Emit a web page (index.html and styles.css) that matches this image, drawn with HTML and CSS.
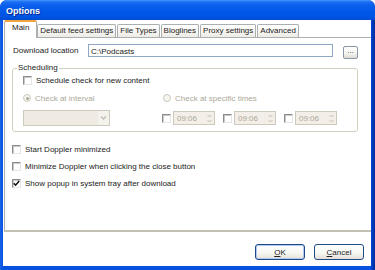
FILE: index.html
```html
<!DOCTYPE html>
<html lang="en">
<head>
  <meta charset="UTF-8">
  <title>Options</title>
  <link rel="stylesheet" href="styles.css">
</head>
<body>
  <div class="window">
    <div class="titlebar">
      <span class="title">Options</span>
    </div>
    <div class="client">
      <div class="tabs">
        <div class="tab active">Main</div>
        <div class="tab">Default feed settings</div>
        <div class="tab">File Types</div>
        <div class="tab">Bloglines</div>
        <div class="tab">Proxy settings</div>
        <div class="tab">Advanced</div>
      </div>

      <div class="panel">
        <div class="location-row">
          <span class="location-label">Download location</span>
          <div class="textbox">C:\Podcasts</div>
          <button class="browse">...</button>
        </div>

        <fieldset class="group">
          <legend>Scheduling</legend>
          <div class="group-body">
            <div class="check-row"><span class="check"></span>Schedule check for new content</div>
            <div class="sched-grid">
              <div class="radio-row"><span class="radio checked"></span>Check at interval</div>
              <div class="radio-row"><span class="radio"></span>Check at specific times</div>
              <div class="combo">
                <span class="combo-btn">
                  <svg width="9" height="8" viewBox="0 0 9 8"><path d="M2 2.5 L4.5 5 L7 2.5" fill="none" stroke="#c2bdb0" stroke-width="1.3"/></svg>
                </span>
              </div>
              <div class="times">
                <div class="time">
                  <span class="check"></span>
                  <span class="timebox"><span class="time-text">09:06</span><span class="spin"><svg width="7" height="11" viewBox="0 0 7 11"><path d="M1.5 4 L3.5 2 L5.5 4 M1.5 7 L3.5 9 L5.5 7" fill="none" stroke="#c2bdb0" stroke-width="1"/></svg></span></span>
                </div>
                <div class="time">
                  <span class="check"></span>
                  <span class="timebox"><span class="time-text">09:06</span><span class="spin"><svg width="7" height="11" viewBox="0 0 7 11"><path d="M1.5 4 L3.5 2 L5.5 4 M1.5 7 L3.5 9 L5.5 7" fill="none" stroke="#c2bdb0" stroke-width="1"/></svg></span></span>
                </div>
                <div class="time">
                  <span class="check"></span>
                  <span class="timebox"><span class="time-text">09:06</span><span class="spin"><svg width="7" height="11" viewBox="0 0 7 11"><path d="M1.5 4 L3.5 2 L5.5 4 M1.5 7 L3.5 9 L5.5 7" fill="none" stroke="#c2bdb0" stroke-width="1"/></svg></span></span>
                </div>
              </div>
            </div>
          </div>
        </fieldset>

        <div class="options">
          <div class="check-row"><span class="check"></span>Start Doppler minimized</div>
          <div class="check-row"><span class="check"></span>Minimize Doppler when clicking the close button</div>
          <div class="check-row">
            <span class="check">
              <svg width="7" height="7" viewBox="0 0 7 7"><path d="M0.8 3.2 L2.6 5.2 L6.2 1" fill="none" stroke="#111" stroke-width="1.5"/></svg>
            </span>Show popup in system tray after download
          </div>
        </div>
      </div>

      <div class="buttons">
        <button class="btn default"><u>O</u>K</button>
        <button class="btn"><u>C</u>ancel</button>
      </div>
    </div>
  </div>
</body>
</html>
```

FILE: styles.css
```css
body {
  margin: 0;
  background: #fff;
  font-family: "Liberation Sans", Arial, sans-serif;
  font-size: 8px;
  color: #222;
}

.window {
  width: 375px;
  height: 270px;
  display: flex;
  flex-direction: column;
  background: linear-gradient(90deg, #1a63ea 0, #0552e0 3px, #0552e0 371px, #0039c4 372px, #002f9e 375px);
  border-radius: 7px 7px 0 0;
  overflow: hidden;
}

.titlebar {
  height: 20px;
  display: flex;
  align-items: center;
  padding-left: 6px;
  background: linear-gradient(180deg, #4a97ff 0, #1a6cf2 2px, #0a5eec 6px, #0058e8 12px, #0054e2 17px, #004ad0 20px);
}

.title {
  color: #fff;
  font-weight: bold;
  font-size: 9px;
  text-shadow: 1px 1px 0 #0b2a8a;
  padding-top: 1px;
}

.client {
  flex: 1;
  display: flex;
  flex-direction: column;
  margin: 0 4px 4px 3px;
  background: #fff;
}

/* tab strip */
.tabs {
  display: flex;
  align-items: flex-end;
  height: 14px;
  margin-top: 3px;
  padding-left: 1px;
}

.tab {
  height: 12px;
  line-height: 12px;
  padding: 0 2px;
  margin-right: 1px;
  border: 1px solid #aab0b1;
  border-bottom: none;
  border-radius: 2px 2px 0 0;
  background: linear-gradient(180deg, #fff 0, #f8f7f3 50%, #ecebe5 100%);
  white-space: nowrap;
}

.tab.active {
  position: relative;
  z-index: 1;
  height: 14px;
  line-height: 12px;
  margin-bottom: -1px;
  padding: 0 7px 2px;
  margin-right: 0;
  background: #fff;
  border-top: 2px solid #f0a53c;
}

.panel {
  flex: 1;
  display: flex;
  flex-direction: column;
  border-top: 1px solid #aab0b1;
  border-left: 1px solid #aab0b1;
  border-bottom: 2px solid #c3c0b4;
  margin-left: 1px;
}

/* download location */
.location-row {
  display: flex;
  align-items: flex-start;
  margin: 6px 0 0 8px;
}

.location-label {
  width: 75px;
  line-height: 13px;
}

.textbox {
  width: 245px;
  height: 13px;
  line-height: 13px;
  padding-left: 2px;
  border: 1px solid #8fa6c4;
  box-sizing: border-box;
}

.browse {
  width: 15px;
  height: 13px;
  margin: 2px 0 0 10px;
  padding: 0 0 3px;
  border: 1px solid #8a97a8;
  border-radius: 2px;
  background: linear-gradient(180deg, #fff 0, #f3f3ef 60%, #dedbd3 100%);
  font-family: inherit;
  font-size: 8px;
  line-height: 8px;
  color: #333;
}

/* scheduling group */
.group {
  margin: 4px 13px 0 7px;
  padding: 2px 0 5px;
  border: 1px solid #d0d0bf;
  border-radius: 3px;
  min-width: 0;
}

.group legend {
  margin-left: 4px;
  padding: 0 1px;
  line-height: 10px;
}

.group-body {
  padding-left: 10px;
}

.check-row {
  display: flex;
  align-items: center;
  height: 10px;
  white-space: nowrap;
}

.check {
  width: 9px;
  height: 9px;
  box-sizing: border-box;
  margin-right: 4px;
  display: flex;
  align-items: center;
  justify-content: center;
  border: 1px solid;
  border-color: #8c8c8c #e6e6e6 #e6e6e6 #8c8c8c;
  box-shadow: inset 1px 1px 0 #c8c8c8;
  background: #fff;
  flex: none;
}

.sched-grid {
  display: grid;
  grid-template-columns: 140px 1fr;
  row-gap: 7px;
  margin-top: 8px;
}

.radio-row {
  display: flex;
  align-items: center;
  height: 10px;
  color: #aca899;
  white-space: nowrap;
}

.radio {
  width: 8px;
  height: 8px;
  box-sizing: border-box;
  margin-right: 4px;
  border: 1px solid #cac8bb;
  border-radius: 50%;
  display: flex;
  align-items: center;
  justify-content: center;
  background: #f6f5f0;
}

.radio.checked::after {
  content: "";
  width: 3px;
  height: 3px;
  border-radius: 50%;
  background: #aca899;
}

.combo {
  width: 87px;
  height: 16px;
  box-sizing: border-box;
  border: 1px solid #cdc9bc;
  background: #efebe3;
  display: flex;
  justify-content: flex-end;
}

.combo-btn {
  width: 11px;
  display: flex;
  align-items: center;
  justify-content: center;
  background: #f4f2ec;
}

.times {
  display: flex;
  align-items: center;
  margin-left: -1px;
}

.time {
  display: flex;
  align-items: center;
  margin-right: 8px;
}

.time .check {
  margin-right: 2px;
}

.timebox {
  width: 42px;
  height: 14px;
  box-sizing: border-box;
  border: 1px solid #cdc9bc;
  background: #f3efe8;
  display: flex;
  align-items: center;
  justify-content: space-between;
  color: #aca899;
}

.time-text {
  padding-left: 3px;
}

.spin {
  width: 10px;
  display: flex;
  justify-content: center;
}

/* lower checkboxes */
.options {
  margin: 9px 0 0 7px;
}

.options .check-row {
  height: 17px;
}

/* dialog buttons */
.buttons {
  height: 34px;
  display: flex;
  justify-content: flex-end;
  align-items: flex-start;
  padding: 12px 7px 0 0;
  box-sizing: border-box;
  gap: 9px;
}

.btn {
  width: 50px;
  height: 16px;
  padding: 0;
  border: 1px solid #1f4a86;
  border-radius: 3px;
  background: linear-gradient(180deg, #fff 0, #f6f6f2 60%, #e2dfd6 100%);
  font-family: inherit;
  font-size: 8px;
  color: #222;
}

.btn.default {
  box-shadow: inset 0 0 0 1px #b2c8f0;
}
```
